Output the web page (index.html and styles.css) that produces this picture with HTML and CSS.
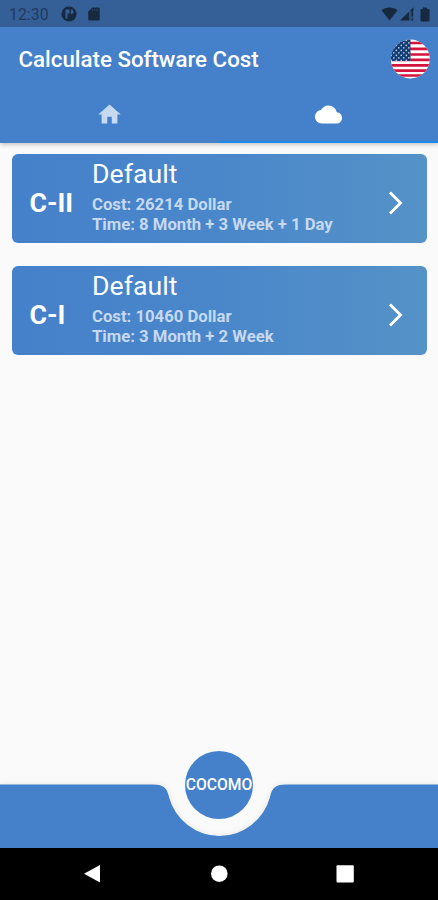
FILE: index.html
```html
<!DOCTYPE html>
<html lang="en">
<head>
    <meta charset="UTF-8">
    <meta name="viewport" content="width=device-width, initial-scale=1.0">
    <title>Calculate Software Cost</title>
    <link rel="stylesheet" href="styles.css">
</head>
<body>
    <!-- Status bar -->
    <div class="status-bar">
        <span class="clock">12:30</span>
        <svg class="status-app" width="16" height="16" viewBox="0 0 16 16">
            <circle cx="8" cy="8" r="7.6" fill="#17293f"/>
            <path d="M4.500 3.500h4v3.800H6.500v5.200H4.500zM9.800 3.500c2.300 0 3 1.300 2.800 2.800-.2 1.300-1.300 2-2.800 2z" fill="#355f97"/>
        </svg>
        <svg width="12" height="14" viewBox="0 0 12 14">
            <path d="M4.300.500H10.500Q11.700.500 11.700 1.700V12.200Q11.700 13.400 10.500 13.400H1.500Q.300 13.400.300 12.200V4.500z" fill="#17293f"/>
            <path d="M4.500 2v2.300M6.700 2v2.300M8.900 2v2.300" stroke="#2a4a74" stroke-width=".8"/>
        </svg>
        <div class="status-right">
            <svg width="17" height="14" viewBox="0 0 17 14">
                <path d="M8.500 13.500.500 3.300C5-.4 12-.4 16.500 3.300z" fill="#17293f"/>
            </svg>
            <svg class="signal" width="14" height="14" viewBox="0 0 14 14">
                <path d="M0 13.500 13.500.200V4H9v9.500z" fill="#17293f"/>
                <path d="M9 4h4.500v9.500H9z" fill="#2b5082"/>
                <path d="M11.500 4h1.500v5.500h-1.500zM11.500 11.500h1.500v2h-1.500z" fill="#17293f"/>
            </svg>
            <svg class="battery" width="10" height="15" viewBox="0 0 10 15">
                <path d="M3 .5h4V2h1.500Q9.500 2 9.500 3v10.500Q9.500 14.500 8.500 14.500h-7Q.5 14.500.5 13.500V3Q.5 2 1.500 2H3z" fill="#17293f"/>
            </svg>
        </div>
    </div>

    <!-- App bar with tabs -->
    <header class="app-bar">
        <div class="toolbar">
            <h1>Calculate Software Cost</h1>
            <svg class="flag" width="40" height="40" viewBox="0 0 40 40">
                <defs>
                    <clipPath id="round"><circle cx="20.300" cy="20" r="19.500"/></clipPath>
                    <pattern id="stars" width="5" height="5" patternUnits="userSpaceOnUse">
                        <circle cx="1.300" cy="1.300" r=".85" fill="#c3d0e3"/>
                        <circle cx="3.800" cy="3.800" r=".85" fill="#c3d0e3"/>
                    </pattern>
                </defs>
                <g clip-path="url(#round)">
                    <path d="M0 0h40v40H0z" fill="#fff"/>
                    <path d="M0 4h40M0 9.900h40M0 15.500h40M0 20.800h40M0 26.400h40M0 31.600h40M0 36.500h40" stroke="#d5133d" stroke-width="2.700"/>
                    <path d="M0 0h20.500v22H0z" fill="#103c75"/>
                    <path d="M0 0h20.500v22H0z" fill="url(#stars)"/>
                </g>
            </svg>
        </div>
        <nav class="tabs">
            <div class="tab">
                <svg width="27" height="27" viewBox="0 0 24 24"><path d="M10 20v-6h4v6h5v-8h3L12 3 2 12h3v8z"/></svg>
            </div>
            <div class="tab active">
                <svg width="27" height="27" viewBox="0 0 24 24"><path d="M19.350 10.040C18.670 6.590 15.640 4 12 4 9.110 4 6.600 5.640 5.350 8.040 2.340 8.360 0 10.910 0 14c0 3.310 2.690 6 6 6h13c2.760 0 5-2.240 5-5 0-2.640-2.050-4.780-4.650-4.960z"/></svg>
            </div>
        </nav>
    </header>

    <!-- Saved estimates -->
    <main class="list">
        <div class="card">
            <div class="model">C-II</div>
            <div class="details">
                <h2>Default</h2>
                <p>Cost: 26214 Dollar</p>
                <p>Time: 8 Month + 3 Week + 1 Day</p>
            </div>
            <svg class="arrow" width="16" height="24" viewBox="0 0 16 24"><path d="M2 1.500 12.500 12 2 22.500"/></svg>
        </div>
        <div class="card">
            <div class="model">C-I</div>
            <div class="details">
                <h2>Default</h2>
                <p>Cost: 10460 Dollar</p>
                <p>Time: 3 Month + 2 Week</p>
            </div>
            <svg class="arrow" width="16" height="24" viewBox="0 0 16 24"><path d="M2 1.500 12.500 12 2 22.500"/></svg>
        </div>
    </main>

    <!-- Bottom bar with notch -->
    <footer class="bottom-bar">
        <svg class="notch" width="438" height="64" viewBox="0 0 438 64">
            <path d="M0 .5H153C163 .5 167 3.500 169 13A52.200 52.200 0 0 0 270 13C272 3.500 276 .5 286 .5H438V64H0z" fill="#4580ca"/>
        </svg>
        <div class="fab">COCOMO</div>
    </footer>

    <!-- System navigation -->
    <div class="nav-bar">
        <svg width="18" height="20" viewBox="0 0 18 20"><path d="M17 1v17.500L1 9.800z"/></svg>
        <svg width="18" height="20" viewBox="0 0 18 20"><circle cx="9.300" cy="9.700" r="8.300"/></svg>
        <svg width="18" height="20" viewBox="0 0 18 20"><rect x=".500" y="1.200" width="17.300" height="17.400" rx="1"/></svg>
    </div>
</body>
</html>
```

FILE: styles.css
```css
* {
    box-sizing: border-box;
}
body {
    font-family: Roboto, sans-serif;
    display: flex;
    flex-direction: column;
    width: 438px;
    height: 900px;
    margin: 0;
    background: #fafafa;
    color: white;
    overflow: hidden;
}
svg {
    display: block;
    flex-shrink: 0;
}
h1, h2, p {
    margin: 0;
}
.status-bar {
    display: flex;
    align-items: center;
    height: 27px;
    padding: 1px 8px 0 9px;
    background: #355f97;
}
.clock {
    width: 52px;
    font-size: 15.7px;
    letter-spacing: 0.1px;
    color: #203a5c;
}
.status-app {
    margin-right: 11px;
}
.status-right {
    display: flex;
    align-items: center;
    margin-left: auto;
}
.signal {
    margin-left: 2px;
}
.battery {
    margin-left: 6px;
}
.app-bar {
    height: 116px;
    background: #4580ca;
    box-shadow: 0 2px 4px rgba(0, 0, 0, 0.2);
}
.toolbar {
    display: flex;
    align-items: center;
    justify-content: space-between;
    height: 63px;
    padding: 0 8px 0 18.5px;
}
.toolbar h1 {
    padding-top: 1px;
    font-size: 22.3px;
    font-weight: 500;
}
.tabs {
    display: flex;
    height: 53px;
}
.tab {
    flex: 1;
    display: flex;
    justify-content: center;
    padding-top: 11px;
    fill: #c7d9ef;
    border-bottom: 2px solid transparent;
}
.tab.active {
    fill: white;
    border-bottom-color: #1e8ae6;
}
.list {
    flex: 1;
    padding: 11.5px 11px 0 11.5px;
}
.card {
    display: flex;
    align-items: center;
    height: 89px;
    margin-bottom: 22.5px;
    padding: 0 23px 0 18px;
    border-radius: 6px;
    background: linear-gradient(to right, #4580ca, #4b88ca 55%, #5592c7);
}
/* first card sits slightly closer to the tabs */
.card:first-child {
    margin-top: -0.3px;
    margin-bottom: 22.8px;
}
.model {
    width: 62.5px;
    padding-top: 9px;
    font-size: 26.7px;
    font-weight: 700;
}
.details {
    flex: 1;
    align-self: flex-start;
    padding-top: 5px;
}
.details h2 {
    margin-bottom: 5.5px;
    font-size: 26.7px;
    font-weight: 400;
    line-height: 30px;
}
.details p {
    font-size: 16.7px;
    font-weight: 700;
    line-height: 20.5px;
    color: #c6d9f1;
}
.arrow {
    margin-top: 9px;
    fill: none;
    stroke: white;
    stroke-width: 2.8;
}
.bottom-bar {
    position: relative;
    height: 64px;
}
.notch {
    filter: drop-shadow(0 0 3px rgba(0, 0, 0, 0.08));
}
.fab {
    position: absolute;
    left: 185px;
    top: -33.5px;
    display: flex;
    align-items: center;
    justify-content: center;
    width: 68px;
    height: 68px;
    border-radius: 50%;
    background: #4580ca;
    font-size: 15.7px;
    font-weight: 500;
}
.nav-bar {
    display: flex;
    justify-content: space-between;
    height: 52px;
    padding: 16px 84px 0 83px;
    background: black;
    fill: white;
}
```
